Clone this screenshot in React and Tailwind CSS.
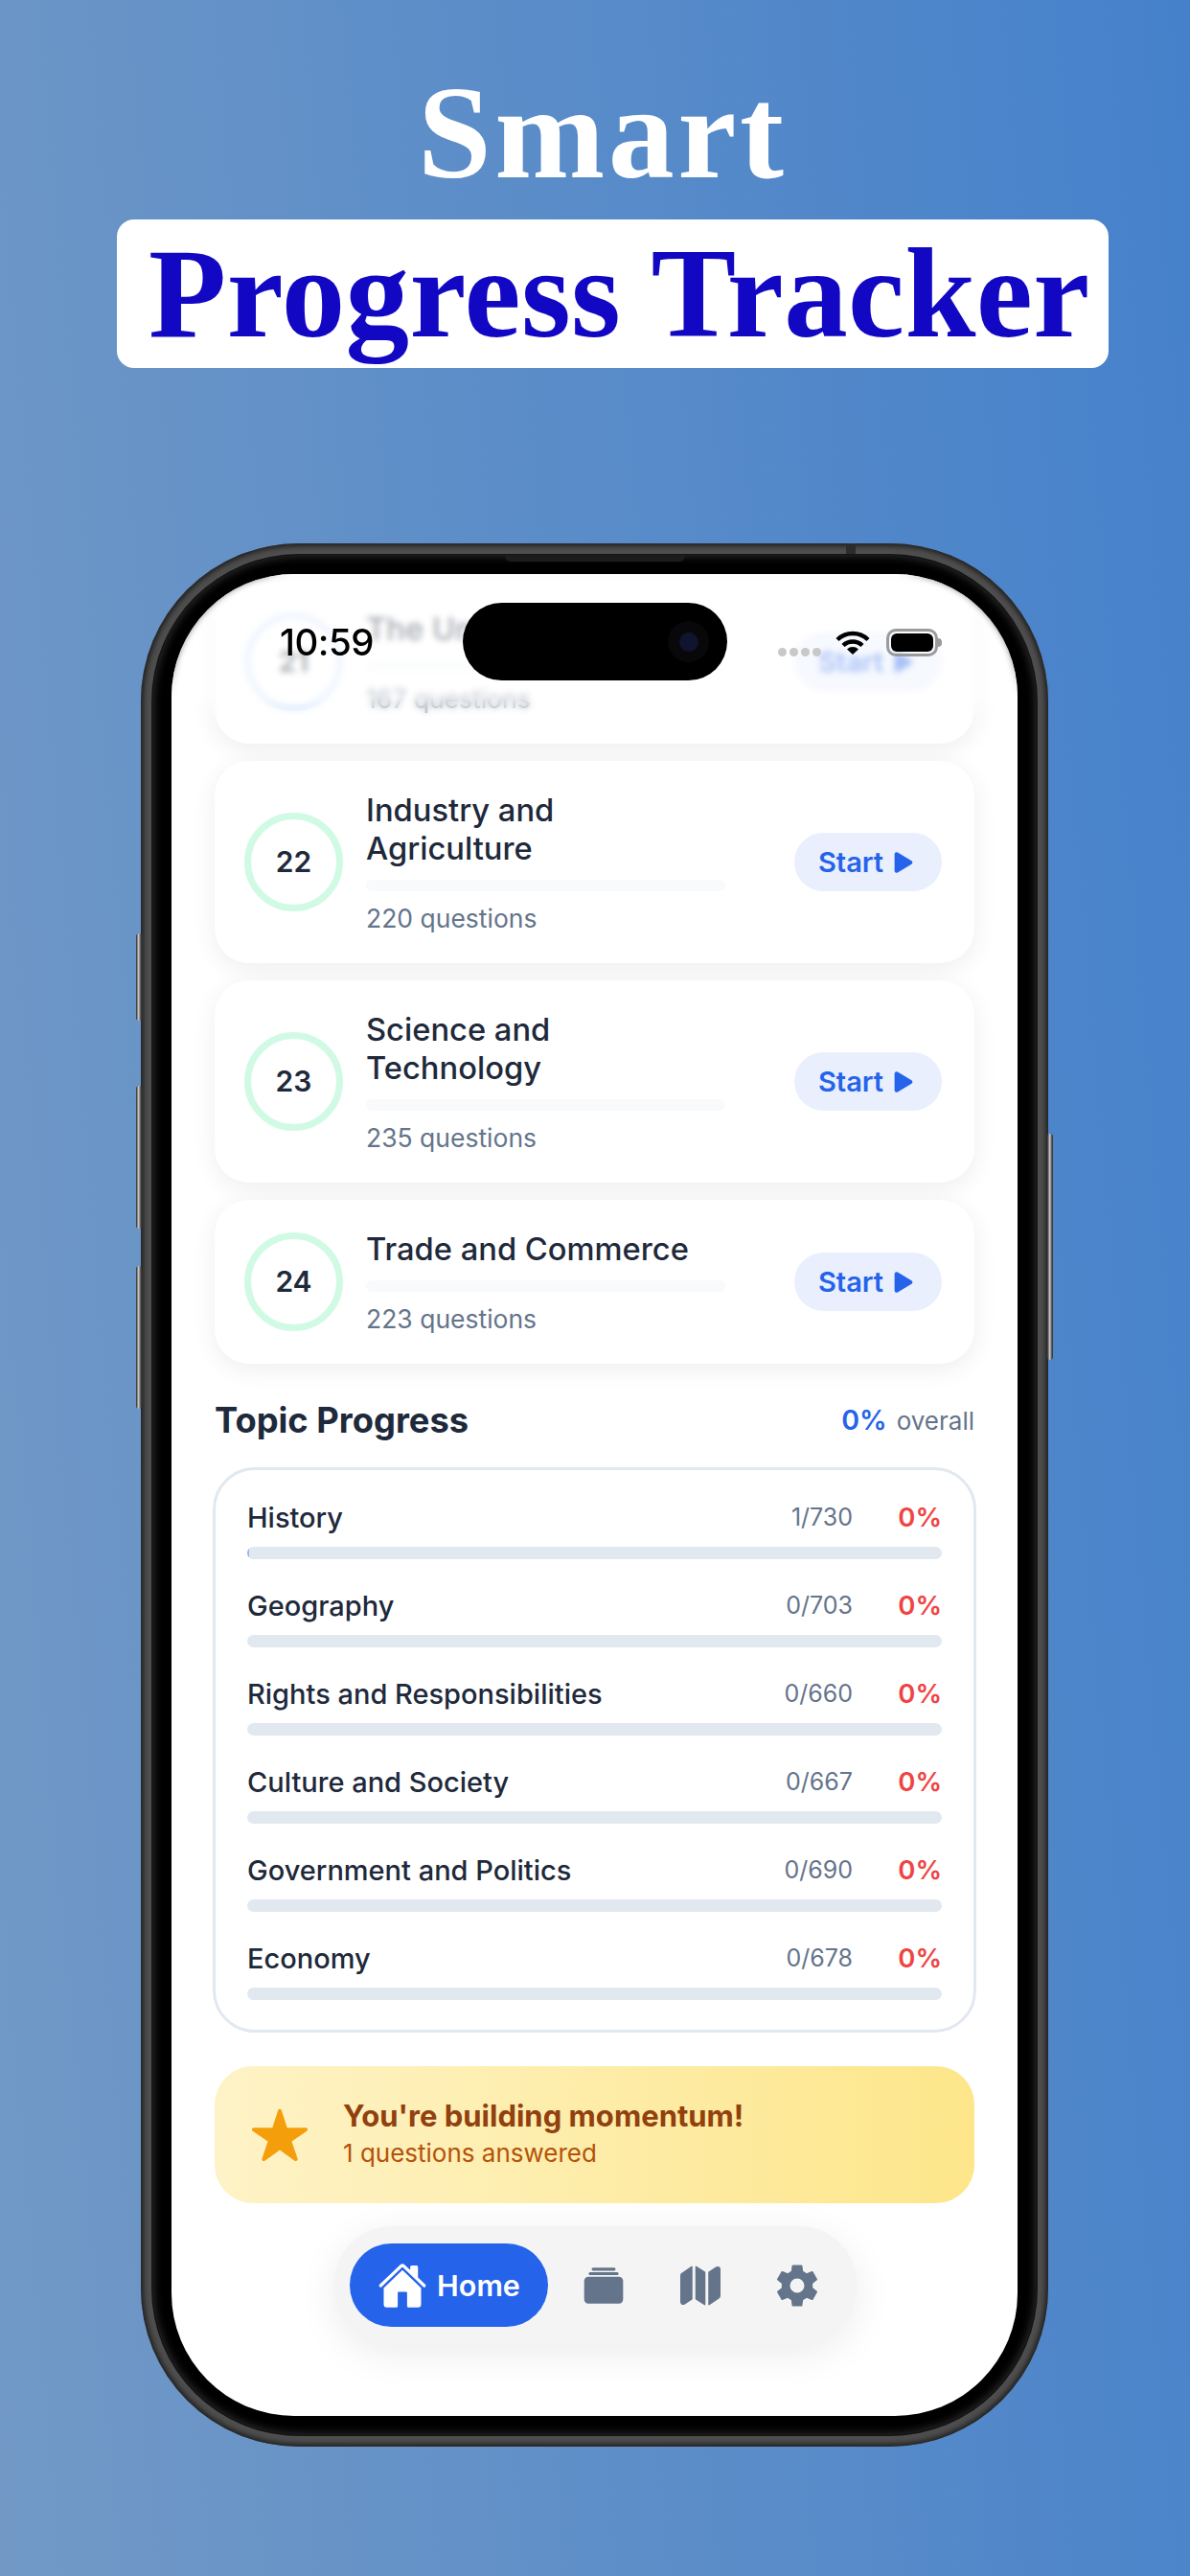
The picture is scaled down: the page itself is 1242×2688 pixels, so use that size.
import { IoHome, IoAlbums, IoMap, IoSettingsSharp, IoPlay, IoStar } from "react-icons/io5";

const chapters = [
  { n: 22, title: ["Industry and", "Agriculture"], count: 220 },
  { n: 23, title: ["Science and", "Technology"], count: 235 },
  { n: 24, title: ["Trade and Commerce"], count: 223 },
];

const topics = [
  { name: "History", done: "1/730", fill: true },
  { name: "Geography", done: "0/703" },
  { name: "Rights and Responsibilities", done: "0/660" },
  { name: "Culture and Society", done: "0/667" },
  { name: "Government and Politics", done: "0/690" },
  { name: "Economy", done: "0/678" },
];

function ChapterCard({ n, title, count, faded }) {
  return (
    <div className="flex items-center rounded-[36px] bg-white p-[31px] pr-[34px] shadow-[0_6px_26px_rgba(0,0,0,0.07)]">
      <div className={`flex h-[103px] w-[103px] shrink-0 items-center justify-center rounded-full border-[7px] text-[30px] font-semibold text-[#1e293b] ${faded ? "border-[#dbeafe]" : "border-[#d1fae5]"}`}>
        {n}
      </div>
      <div className="ml-[24px] w-[375px]">
        <div className="text-[32.7px] leading-[40px] font-medium whitespace-nowrap text-[#1e293b]">
          {title.map((line) => (
            <div key={line}>{line}</div>
          ))}
        </div>
        <div className="mt-[13px] mb-[12px] h-[12px] rounded-full bg-[#f8fafc]" />
        <div className="text-[26.5px] leading-[32px] text-[#64748b]">{count} questions</div>
      </div>
      <button className="ml-auto flex h-[61px] w-[154px] items-center justify-center gap-[6px] rounded-full bg-[#e9effd] text-[29px] font-semibold text-[#2563eb]">
        Start <IoPlay size={30} />
      </button>
    </div>
  );
}

function TopicRow({ name, done, fill }) {
  return (
    <div className="h-[92px]">
      <div className="flex h-[48px] items-center">
        <span className="text-[29px] font-medium text-[#1e293b]">{name}</span>
        <span className="ml-auto text-[25px] text-[#64748b]">{done}</span>
        <span className="w-[93px] text-right text-[27.5px] font-semibold text-[#ef4444]">0%</span>
      </div>
      <div className="mt-[6px] h-[13px] overflow-hidden rounded-full bg-[#e2e8f0]">
        {fill && <div className="h-full w-[2px] bg-[#93b4f5]" />}
      </div>
    </div>
  );
}

function StatusBar() {
  return (
    <div className="absolute inset-x-0 top-0 h-[165px]">
      <div className="absolute inset-0 bg-white/60 backdrop-blur-[3px] [mask-image:linear-gradient(to_bottom,black_78%,transparent)]" />
      <div className="absolute top-[30px] left-[304px] flex h-[81px] w-[276px] items-center justify-end rounded-full bg-black pr-[19px]">
        <div className="flex h-[43px] w-[43px] items-center justify-center rounded-full bg-[#08080b]">
          <div className="h-[20px] w-[20px] rounded-full bg-[#10142e]" />
        </div>
      </div>
      <div className="absolute top-[46px] left-[113px] text-[38.5px] leading-[50px] font-medium tracking-[-0.5px] text-black">10:59</div>
      <div className="absolute top-[57px] left-[633px] flex items-start">
        <div className="mt-[20px] flex gap-[3px]">
          <span className="h-[9px] w-[9px] rounded-full bg-[#c8c8c8]" />
          <span className="h-[9px] w-[9px] rounded-full bg-[#c8c8c8]" />
          <span className="h-[9px] w-[9px] rounded-full bg-[#c8c8c8]" />
          <span className="h-[9px] w-[9px] rounded-full bg-[#c8c8c8]" />
        </div>
        <svg width="36" height="26" viewBox="0 0 36 26" className="mt-[1px] ml-[15px]">
          <path d="M2 10.5A23 23 0 0 1 34 10.5" fill="none" stroke="black" strokeWidth="4.4" />
          <path d="M8 16.5A14.5 14.5 0 0 1 28 16.5" fill="none" stroke="black" strokeWidth="4.4" />
          <path d="M18 26L12 20.5A8.5 8.5 0 0 1 24 20.5Z" fill="black" />
        </svg>
        <div className="ml-[17px] flex h-[29px] w-[54px] items-center justify-center rounded-[10px] border-[3px] border-[#9a9a9a]">
          <div className="h-[19px] w-[44px] rounded-[6px] bg-black" />
        </div>
        <div className="mt-[10px] h-[9px] w-[4px] rounded-r-full bg-[#9a9a9a]" />
      </div>
    </div>
  );
}

function SideButton({ className }) {
  return <div className={`absolute w-[6px] rounded-[3px] bg-[linear-gradient(90deg,#242424,#d0d0d0_45%,#6a6a6a_70%,#2a2a2a)] ${className}`} />;
}

export default function App() {
  return (
    <div className="flex h-[2688px] w-[1242px] flex-col overflow-hidden bg-[linear-gradient(85deg,#7299c6,#4581cb)] font-['Inter',sans-serif]">
      <h1 className="mt-[69px] ml-[436px] text-[138px] leading-[140px] font-bold tracking-[3.5px] text-white font-['Liberation_Serif',serif]">Smart</h1>
      <div className="mt-[20px] ml-[122px] h-[155px] w-[1035px] rounded-[18px] bg-white pl-[33px] text-[133px] leading-[155px] font-bold tracking-[0.4px] whitespace-nowrap text-[#1208c4] font-['Liberation_Serif',serif]">
        Progress Tracker
      </div>

      <div className="relative mt-[183px] ml-[147px] h-[1986px] w-[947px] shrink-0 rounded-[165px] bg-[#4e4e4e] p-[12px] shadow-[inset_0_0_5px_3px_#222222]">
        <SideButton className="top-[407px] -left-[5px] h-[91px]" />
        <SideButton className="top-[566px] -left-[5px] h-[149px]" />
        <SideButton className="top-[754px] -left-[5px] h-[149px]" />
        <SideButton className="top-[616px] -right-[5px] h-[236px]" />
        <div className="absolute top-0 left-[736px] h-[12px] w-[10px] bg-[#2c2c2c]" />

        <div className="relative h-full rounded-[153px] bg-black p-[20px] shadow-[0_0_0_1px_#141414,inset_0_0_8px_2px_#2a2a2a]">
          <div className="absolute top-0 left-[368px] h-[7px] w-[188px] rounded-b-[6px] bg-[#1c1c1c]" />
          <div className="relative h-[1922px] overflow-hidden rounded-[128px] bg-white">
            <div className="flex h-full flex-col pt-[6px]">
              <div className="mx-[45px] flex flex-col gap-[18px]">
                <ChapterCard n={21} title={["The Union"]} count={167} faded />
                {chapters.map((c) => (
                  <ChapterCard key={c.n} {...c} />
                ))}
              </div>

              <div className="mx-[45px] mt-[37px] flex items-center justify-between">
                <span className="text-[36.3px] leading-[44px] font-bold text-[#1e293b]">Topic Progress</span>
                <span className="text-[26px] text-[#64748b]">
                  <span className="mr-[10px] text-[28.5px] font-semibold text-[#2563eb]">0%</span>overall
                </span>
              </div>

              <div className="mx-[43px] mt-[27px] h-[590px] shrink-0 rounded-[44px] border-[3px] border-[#e2e8f0] px-[33px] pt-[26px]">
                {topics.map((t) => (
                  <TopicRow key={t.name} {...t} />
                ))}
              </div>

              <div className="mx-[45px] mt-[35px] flex h-[143px] shrink-0 items-center rounded-[40px] bg-[linear-gradient(90deg,#fef3c7,#fde68a)] pl-[37px]">
                <IoStar size={62} className="text-[#f59e0b]" />
                <div className="ml-[35px]">
                  <div className="text-[31px] leading-[38px] font-bold text-[#92400e]">You're building momentum!</div>
                  <div className="mt-[1px] text-[26px] leading-[38px] text-[#b45309]">1 questions answered</div>
                </div>
              </div>

              <nav className="mt-[24px] ml-[170px] flex h-[123px] w-[545px] shrink-0 items-center rounded-[60px] bg-[#f4f4f5] pl-[16px] shadow-[0_10px_40px_rgba(0,0,0,0.08)]">
                <div className="flex h-[87px] w-[207px] items-center justify-center gap-[10px] rounded-full bg-[#2563eb] text-[30.5px] font-semibold text-white">
                  <IoHome size={52} /> Home
                </div>
                <IoAlbums size={50} className="ml-[33px] text-[#64748b]" />
                <IoMap size={48} className="ml-[52px] text-[#64748b]" />
                <IoSettingsSharp size={48} className="ml-[53px] text-[#64748b]" />
              </nav>
            </div>
            <StatusBar />
          </div>
        </div>
      </div>
    </div>
  );
}
